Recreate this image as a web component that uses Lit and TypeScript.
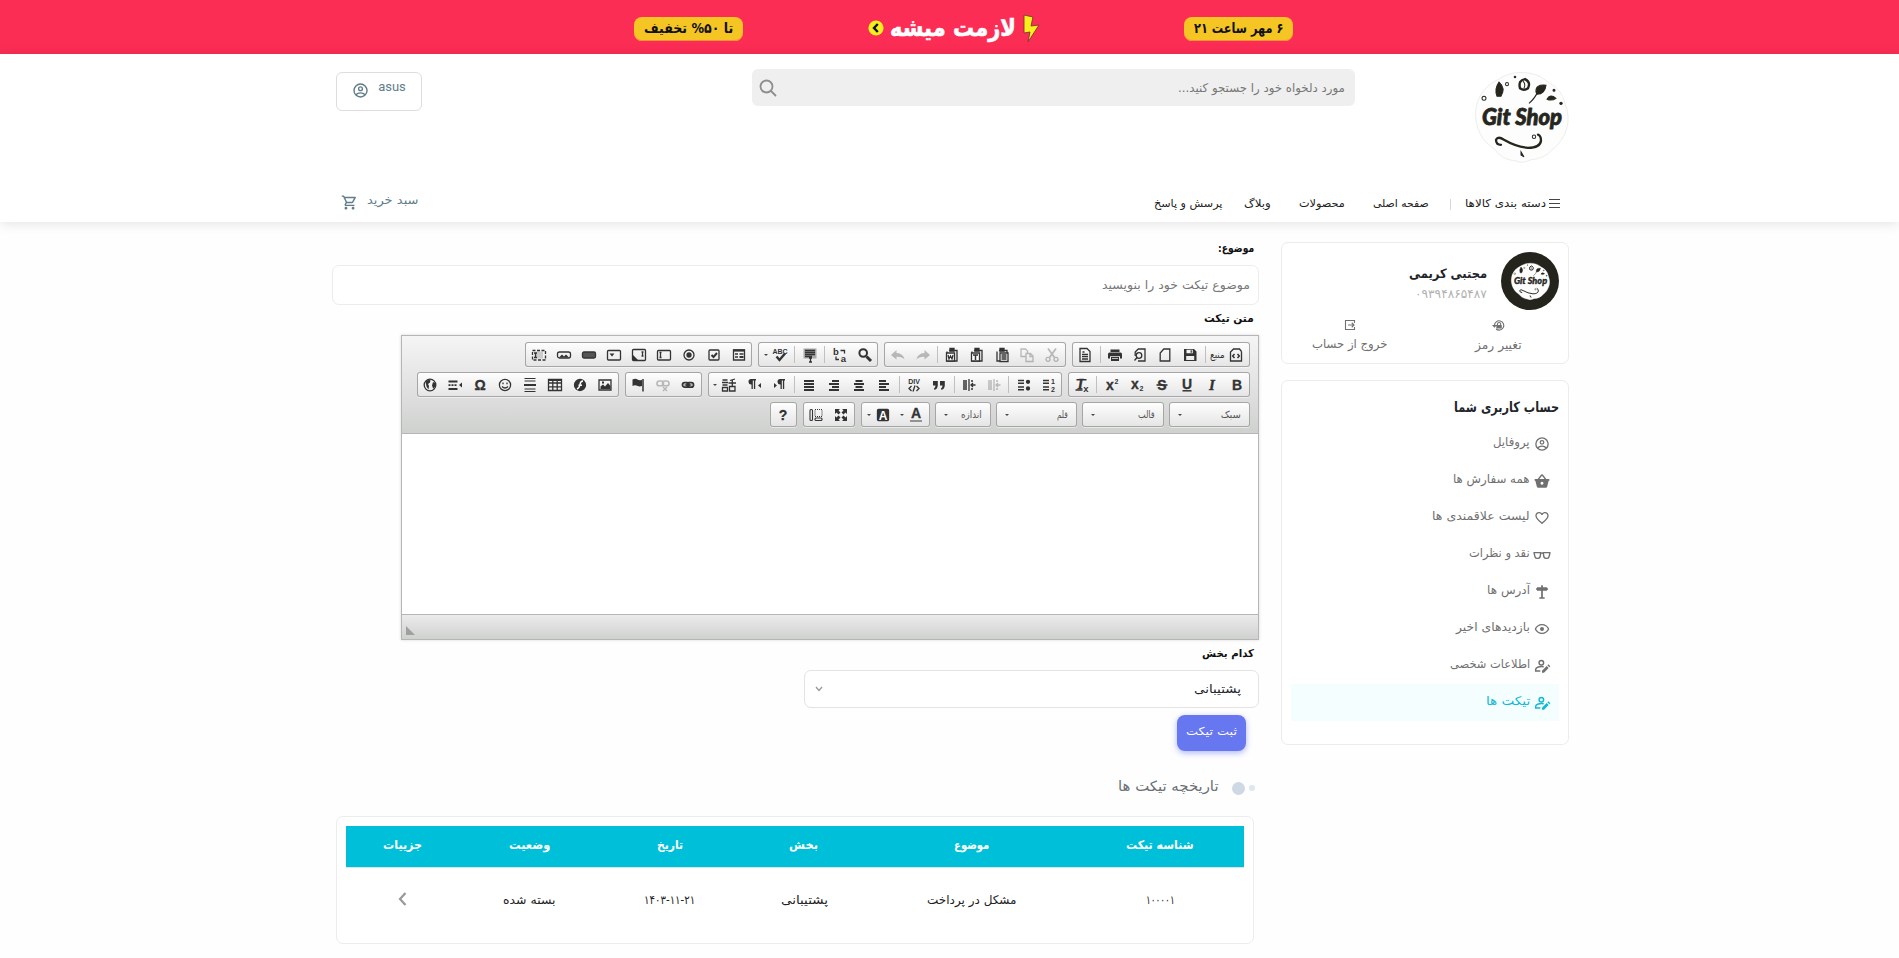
import { LitElement, html, svg, css, nothing } from "lit";
import { customElement, property } from "lit/decorators.js";

/* ---------- text that keeps to a given line width ---------- */
@customElement("fit-text")
class FitText extends LitElement {
  @property({ type: Number }) w = 0;
  static styles = css`
    :host { display: inline-flex; justify-content: flex-start; white-space: nowrap; flex: none; }
    .run { display: inline-block; flex: none; transform-origin: 100% 50%; }
  `;
  firstUpdated() {
    this.fit();
    document.fonts.ready.then(() => this.fit());
  }
  fit() {
    const run = this.renderRoot.querySelector(".run") as HTMLElement;
    const natural = run.offsetWidth;
    this.style.width = this.w + "px";
    if (natural) run.style.transform = `scaleX(${this.w / natural})`;
  }
  render() {
    return html`<span class="run"><slot></slot></span>`;
  }
}

const t = (text: string, w: number) => html`<fit-text w=${w}>${text}</fit-text>`;

/* ---------- icons ---------- */
const icon = (body: unknown, size = 16, box = 16) =>
  html`<svg width=${size} height=${size} viewBox="0 0 ${box} ${box}" fill="none" stroke="currentColor" stroke-width="1.3">${body}</svg>`;
const solid = (d: string) => svg`<path fill="currentColor" stroke="none" fill-rule="evenodd" d=${d} />`;
const line = (d: string) => svg`<path d=${d} />`;
const lines = (rows: [number, number, number][]) =>
  solid(rows.map(([x, y, w]) => `M${x} ${y}h${w}v2h-${w}z`).join(""));

const account = svg`<circle cx="12" cy="12" r="9.2" stroke-width="2"/><circle cx="12" cy="9.5" r="2.7" stroke-width="1.9"/><path stroke-width="2" d="M5.6 18c3-3.6 9.800-3.600 12.800 0"/>`;
const cart = solid("M15.55 13c.75 0 1.41-.41 1.75-1.03l3.58-6.49A.996.996 0 0 0 20.01 4H5.21l-.94-2H1v2h2l3.6 7.59-1.35 2.44C4.52 15.37 5.48 17 7 17h12v-2H7l1.1-2h7.45zM6.16 6h12.15l-2.76 5H8.53L6.16 6zM7 18c-1.1 0-1.99.9-1.99 2S5.9 22 7 22s2-.9 2-2-.9-2-2-2zm10 0c-1.1 0-1.99.9-1.99 2s.89 2 1.99 2 2-.9 2-2-.9-2-2-2z");
const basket = solid("M1 9h4.500l5.200-6.600q1.300-1.400 2.600 0L18.500 9H23v2.500h-1l-2.300 9q-.4 1.500-1.900 1.500H6.200q-1.500 0-1.900-1.500l-2.300-9H1zM8.200 9h7.600L12 4.300zM12 13.300a2.200 2.200 0 1 0 .01 0z");
const heart = solid("M12.1 18.55l-.1.1-.11-.1C7.14 14.24 4 11.39 4 8.5 4 6.5 5.5 5 7.5 5c1.54 0 3.04 1 3.57 2.36h1.86C13.46 6 14.96 5 16.5 5c2 0 3.5 1.5 3.5 3.5 0 2.89-3.14 5.74-7.9 10.05M16.5 3c-1.74 0-3.41.81-4.5 2.08C10.91 3.81 9.24 3 7.5 3 4.42 3 2 5.41 2 8.5c0 3.77 3.4 6.86 8.55 11.53L12 21.35l1.45-1.32C18.6 15.36 22 12.27 22 8.5 22 5.41 19.58 3 16.5 3z");
const glasses = svg`<path stroke-width="2.100" stroke-linejoin="round" d="M0 8.400h10l-.5 5q-.4 3.600-3.500 3.600H4.500q-2.700 0-3.200-3zM14 8.400h10l-1.300 5.600q-.5 3-3.200 3H18q-3.100 0-3.500-3.600zM9.500 9.800q2.500-1.600 5 0"/>`;
const sign = solid("M10.700 2h2.600v3H19l2.500 2.600L19 10.200h-5.700V20H16v2H8v-2h2.700v-9.800H4.500V8.800H3V6.500h1.500V5h6.200z");
const eye = solid("M12 9a3 3 0 0 1 3 3 3 3 0 0 1-3 3 3 3 0 0 1-3-3 3 3 0 0 1 3-3m0-4.500c5 0 9.270 3.110 11 7.500-1.730 4.390-6 7.500-11 7.500S2.730 16.390 1 12c1.730-4.390 6-7.500 11-7.500M3.180 12a9.821 9.821 0 0 0 17.640 0 9.821 9.821 0 0 0-17.640 0z");
const accountEdit = svg`<circle cx="11" cy="7.200" r="3.400" stroke-width="2.200"/><path stroke-width="2.200" d="M14.500 13.200C9 12 2.500 14 2.500 17.200V19.500h7"/><path fill="currentColor" stroke="none" d="M12 22v-3l7-7 3 3-7 7zM20 11l1.500-1.500 3 3L23 14z"/>`;
const lockReset = svg`<path stroke-width="2" d="M4.500 12a8.600 8.600 0 1 1 3 6.500"/><path fill="currentColor" stroke="none" d="M0 11h9l-4.500 5zM9 11v-1.500a4 4 0 0 1 8 0V11h1v6.500H8V11zm2 0h4V9.500a2 2 0 0 0-4 0z"/>`;
const logout = svg`<path stroke-width="2.200" d="M21 8V3H3v18h18v-5M8 12h12M15.500 7.500L20 12l-4.500 4.500"/>`;

const page = "M3 1.500h7l3 3v10H3z";
const para = "M8 2h5v1.400h-.8V12h-1.300V3.400H9.800V12H8.500V7.500a2.700 2.700 0 0 1-.5-5.500z";
const clip = svg`<path d="M3 4.500V14h10V3.500H5"/><path fill="currentColor" d="M6 1.500h4v2.500H6z"/>`;
const glyph = (s: string, cls = "") => svg`<text class="glyph ${cls}" x="8" y="13" text-anchor="middle">${s}</text>`;

const icons: Record<string, unknown> = {
  source: svg`${line("M13.500 4.500V14h-11V5l3-3h6l2 2.500")}<path stroke-width="1.500" d="M6.500 7L4.700 9l1.800 2M9.500 7l1.800 2-1.800 2"/>`,
  save: solid("M2 2h10l2.500 2.500V14H2zM4.500 2.800v3.400h6.300V2.800zM4.200 9v4h8V9zM8.600 3.200h1.200v2.500H8.600z"),
  newpage: line("M12.800 14H3.200V6l3.600-4h6z"),
  preview: svg`${line("M6 2h7v12H6M3.200 9V5l3-3")}<circle cx="7" cy="8.500" r="2.800"/>${line("M5 10.500L2.500 13.500")}`,
  print: solid("M3.500 2.500h9V5h-9zM2.500 5.500h11q1.500 0 1.500 1.500v4.500h-2V9.300H3v2.200H1V7q0-1.500 1.500-1.500zM4 10h8v4H4zM5 11v.8h6V11z"),
  templates: svg`${line(page)}${line("M5 7.500h6M5 9.700h6M5.500 5h2M5 12h6")}`,
  cut: svg`<path stroke-width="1.800" d="M4 1.500l6.500 9M12 1.500l-6.500 9"/><circle cx="4" cy="12.300" r="2"/><circle cx="12" cy="12.300" r="2"/>`,
  copy: svg`${line("M7 9.500H2V2h4.500l2 2v2")}${line("M7 6.500h4.500l2.500 2.500v5.500H7zM11 6.500v3h3")}`,
  paste: svg`${clip}<path fill="#fff" d="M6 6h8v8.500H6z"/>${line("M7.500 8h5M7.500 10h5M7.500 12h5")}`,
  pastetext: svg`${clip}<path fill="#fff" d="M2.500 6h8v8h-8z"/><path stroke-width="1.500" d="M4 8h5M6.500 8v5"/>`,
  pasteword: svg`${clip}<path fill="#fff" d="M2.500 6h8v8h-8z"/>${line("M4 8l1 4 1.500-3L8 12l1-4")}`,
  redo: solid("M9.500 3L15 8l-5.500 4.500V9.800Q4 9.500 1.500 12.500 2.500 6.500 9.500 6z"),
  undo: solid("M6.500 3L1 8l5.500 4.500V9.800Q12 9.500 14.500 12.500 13.500 6.500 6.500 6z"),
  find: svg`<circle cx="6.200" cy="6" r="3.800" stroke-width="2"/><path stroke-width="3" d="M9.500 9.500l4.500 4.500"/>`,
  replace: svg`<text class="glyph mid" x="4" y="8" text-anchor="middle">b</text><text class="glyph mid" x="11.500" y="14.500" text-anchor="middle">a</text>${line("M8.500 3.500h4v3M7 12.500H4v-3")}`,
  selectall: svg`<path fill="#a9a9a9" stroke="none" d="M1.500 1.500h13v10h-13z"/>${line("M3 3.500h10M3 5.500h10M3 7.500h10M3 9.500h7M8.500 10v5M7 15h3M7 11h3")}`,
  spell: svg`<text class="glyph tiny" x="8" y="7" text-anchor="middle">ABC</text><path stroke-width="2.400" d="M4.500 9.500l3 3.500L13 6.500"/>`,
  form: svg`<path d="M2.500 3h11v10h-11z"/><path stroke-width="2.200" d="M2 3.500h12"/>${line("M4 7h3M8.500 7h4M4 10h3")}<path stroke-width="2" d="M8.500 10h4"/>`,
  checkbox: svg`<rect x="3" y="3" width="10" height="10" rx="1"/><path stroke-width="2" d="M5.500 8l2 2 3.500-4"/>`,
  radio: svg`<circle cx="8" cy="8" r="5"/><circle cx="8" cy="8" r="2" fill="currentColor"/>`,
  textfield: svg`<rect x="1.500" y="3.500" width="13" height="9.500" rx="1"/>${line("M3.500 5.500h2M4.500 5.500v5M3.500 10.500h2")}`,
  textarea: svg`<rect x="1.500" y="2.500" width="13" height="11" rx="1"/>${line("M10.500 5h2M11.500 5v4M10.500 9h2")}${solid("M2 8l5 5H2z")}`,
  select: svg`<rect x="1.500" y="3.500" width="13" height="9.500" rx="1"/>${solid("M3.500 6.500h5L6 9.500z")}`,
  button: svg`<rect x="1.500" y="5" width="13" height="6" rx="1.500" fill="#555"/>`,
  imagebutton: svg`<rect x="1.500" y="5" width="13" height="6" rx="2"/>${solid("M3 10.500l3-3 2 2 2-2 3 3z")}`,
  hidden: svg`<path fill="#ccc" stroke="none" d="M5 4.500h7v7H5z"/><path stroke-dasharray="3 1.500" d="M1.500 3.500h13v9.500h-13z"/>${line("M3 6h3M4.500 6v4.500M3 10.500h3")}`,
  bold: glyph("B"), italic: glyph("I", "it"),
  underline: svg`<text class="glyph" x="8" y="11.500" text-anchor="middle">U</text><path stroke-width="1.500" d="M3.500 13.800h9"/>`,
  strike: svg`${glyph("S")}<path stroke-width="1.600" d="M2.500 8h11"/>`,
  sub: svg`<text class="glyph" x="6" y="11.500" text-anchor="middle">x</text><text class="glyph tiny" x="12.500" y="14" text-anchor="middle">2</text>`,
  sup: svg`<text class="glyph" x="6" y="12.500" text-anchor="middle">x</text><text class="glyph tiny" x="12.500" y="7" text-anchor="middle">2</text>`,
  removeformat: svg`<text class="glyph it" x="6.500" y="11.500" text-anchor="middle">I</text><path stroke-width="1.600" d="M2.500 2.800h10M1.500 13h7"/><text class="glyph mid" x="12" y="14.500" text-anchor="middle">x</text>`,
  numbered: svg`<path stroke-width="1.500" d="M2 3.500h6M2 6.300h6M2 10h6M2 12.800h6"/><text class="glyph tiny" x="12" y="7" text-anchor="middle">1</text><text class="glyph tiny" x="12" y="14.500" text-anchor="middle">2</text>`,
  bulleted: svg`<path stroke-width="1.500" d="M2 3.500h6M2 6.300h6M2 10h6M2 12.800h6"/><circle cx="12" cy="4.800" r="1.500" fill="currentColor"/><circle cx="12" cy="11.500" r="1.500" fill="currentColor"/>`,
  outdent: svg`${line("M2 4h4M2 6h4M2 8h4M2 10h4M2 12h4M8 2v12M14.500 8H10M12 6l-2 2 2 2M10 4h2M10 12h2")}`,
  indent: svg`${line("M2 4h4M2 6h4M2 8h4M2 10h4M2 12h4M8 2v12M14.500 8H10M12 6l-2 2 2 2M10 4h2M10 12h2")}`,
  quote: solid("M2 4h4.800v4.500Q6.500 12 3.500 13l-.5-1.500Q4.500 10.500 4.500 8.500H2zM9 4h4.800v4.500q-.3 3.500-3.300 4.500l-.5-1.500q1.500-1 1.500-3H9z"),
  div: svg`<text class="glyph tiny" x="8" y="7" text-anchor="middle">DIV</text>${line("M5.500 9L3 11.500 5.500 14M10.500 9l2.500 2.500-2.500 2.500M9 8.500L7 14.500")}`,
  left: lines([[3, 3, 7], [3, 6, 10], [3, 9, 7], [3, 12, 10]]),
  center: lines([[4.500, 3, 7], [3, 6, 10], [4.500, 9, 7], [3, 12, 10]]),
  right: lines([[6, 3, 7], [3, 6, 10], [6, 9, 7], [3, 12, 10]]),
  justify: lines([[3, 3, 10], [3, 6, 10], [3, 9, 10], [3, 12, 10]]),
  ltr: svg`${solid(para)}${solid("M2 6l3 2.500L2 11z")}`,
  rtl: svg`<g transform="translate(-4 0)">${solid(para)}</g>${solid("M14 6l-3 2.500 3 2.500z")}`,
  language: svg`${line("M1.500 3h5M1 5.500h6M1.500 8h5M1.500 10.500h5v3.500h-5zM14 2L9 3.500M7.500 6h7.500M11.300 3v6M8.500 9.500h5.500V14H8.500z")}`,
  link: svg`<rect x="2.500" y="5.700" width="6.500" height="4.400" rx="2.200" stroke-width="1.800"/><rect x="7" y="5.700" width="6.500" height="4.400" rx="2.200" stroke-width="1.800"/>${line("M4.500 8h7")}`,
  unlink: svg`<rect x="2" y="4" width="6.500" height="4.800" rx="2.400" stroke-width="1.600"/><rect x="7.500" y="4" width="6.500" height="4.800" rx="2.400" stroke-width="1.600"/>${line("M8 10l4 4M12 10l-4 4")}`,
  anchor: svg`${solid("M2.500 2.500q3-1.500 5 0t4.500.2V9q-2.500 1-4.800-.2T2.500 9z")}<path stroke-width="1.500" d="M13 2v12.500"/>`,
  image: svg`<path d="M2 3h12v10H2z"/>${solid("M3.500 12V9.500l2.500-2 2 2 3-3.500 2.500 3v3zM5 4.500h2v2H5z")}`,
  flash: svg`<circle cx="8" cy="8" r="5.500" fill="currentColor"/><path stroke="#fff" stroke-width="1.500" d="M11 4Q8.500 4 8 7.500T5 12M6.500 8.300h3.500"/>`,
  table: svg`<path d="M1.500 2.500h13v11h-13zM1.500 6h13M1.500 9.800h13M5.800 4v10M10.200 4v10"/><path stroke-width="2" d="M1 3h14"/>`,
  hr: svg`<path stroke-width="1" d="M2.500 1.500h11M2.500 4h11M2.500 12h11M2.500 14.500h11"/><path stroke-width="2" d="M2 8h12"/>`,
  smiley: svg`<circle cx="8" cy="8" r="5.600"/>${line("M6 5.500v1.800M10 5.500v1.800M5 9.500q3 3 6 0")}`,
  omega: glyph("Ω"),
  pagebreak: svg`<path stroke-width="2.200" d="M1.500 4.500h9M1.500 12h9"/><path stroke-width="1.800" stroke-dasharray="2 1" d="M1.500 8.200h9"/>${solid("M15 5.500v5L12 8z")}`,
  iframe: svg`<circle cx="8" cy="8" r="5.800"/>${solid("M3.500 4.500L7 2.500l1.500 1L8 5.500 6 7l1 2-.5 3.500L4.500 9.500zM11 5l2 1 .2 3.500-2 2.300-1.200-3.300z")}`,
  textcolor: svg`<text class="glyph" x="8" y="11" text-anchor="middle">A</text><path stroke="#888" stroke-width="1.800" d="M2 14h12"/>`,
  bgcolor: svg`<rect x="2.500" y="2.500" width="11" height="11" rx="1" fill="currentColor"/><text class="glyph inv" x="8" y="12.500" text-anchor="middle">A</text>`,
  maximize: solid("M2 2h5L5.500 3.500l2 2-2 2-2-2L2 7zM14 2v5l-1.500-1.500-2 2-2-2 2-2L9 2zM2 14V9l1.500 1.500 2-2 2 2-2 2L7 14zM14 14H9l1.500-1.500-2-2 2-2 2 2L14 9z"),
  showblocks: svg`<g stroke-width="1.100"><rect x="2" y="2.500" width="2.500" height="11" rx="1"/><path stroke-dasharray="1 1" d="M7 2.500h7v7H7z"/><rect x="7" y="11" width="7" height="2.500" rx="1"/></g>`,
  help: glyph("?"),
};

const OFF = new Set(["cut", "copy", "redo", "undo", "outdent", "unlink"]);
const ARROW = new Set(["spell", "language", "textcolor", "bgcolor"]);

const toolbar: string[][] = [
  ["source | save newpage preview print | templates", "cut copy paste pastetext pasteword | redo undo", "find replace | selectall | spell", "form checkbox radio textfield textarea select button imagebutton hidden"],
  ["bold italic underline strike sub sup | removeformat", "numbered bulleted | outdent indent | quote div | left center right justify | ltr rtl language", "link unlink anchor", "image flash table hr smiley omega pagebreak iframe"],
  ["combo:سبک:20:81.500", "combo:قالب:17:81.500", "combo:قلم:11:81.500", "combo:اندازه:21:56", "textcolor bgcolor", "maximize showblocks", "help"],
];

/* ---------- rich text editor ---------- */
@customElement("rich-editor")
class RichEditor extends LitElement {
  static styles = css`
    :host { display: flex; flex-direction: column; box-sizing: border-box; width: 858px; height: 305px; border: 1px solid #b6b6b6; background: #fff; box-shadow: 0 0 3px rgba(0,0,0,.15); }
    .bars { height: 98px; box-sizing: border-box; padding: 6px 8px 0; border-bottom: 1px solid #b6b6b6; background: linear-gradient(#f5f5f5, #cfd1cf); display: flex; flex-direction: column; gap: 5px; }
    .bar { display: flex; gap: 6px; height: 25px; }
    .group { display: flex; flex: none; align-items: center; padding: 0 1px; border-radius: 3px; background: linear-gradient(#fff, #e4e4e4); box-shadow: inset 0 0 0 1px #a6a6a6, 0 1px 0 rgba(255,255,255,.5); color: #333; }
    .btn { display: flex; align-items: center; justify-content: center; width: 25px; height: 25px; }
    .btn.wide { width: 33.300px; gap: 4px; }
    .btn.src { width: 41.500px; gap: 3px; font-size: 10px; padding-left: 2px; box-sizing: border-box; justify-content: flex-end; }
    .off { opacity: .3; }
    .sep { width: 1px; height: 17px; margin: 0 1.900px; background: #c0c0c0; }
    .arr { border: 2px solid transparent; border-top: 2px solid #474747; border-bottom: 0; }
    .combo { box-sizing: border-box; justify-content: space-between; padding: 0 9px; margin-left: -1px; font-size: 10px; height: 25px; color: #555; }
    .body { flex: 1; }
    .foot { height: 25px; box-sizing: border-box; border-top: 1px solid #b6b6b6; background: linear-gradient(#ebebeb, #cfd1cf); display: flex; justify-content: flex-end; align-items: flex-end; padding: 0 0 4px 4px; }
    svg { display: block; flex: none; overflow: visible; }
    .glyph { font: 700 14px "Liberation Sans", sans-serif; fill: currentColor; stroke: currentColor; stroke-width: .3px; }
    .it { font-family: "Liberation Serif", serif; font-style: italic; font-size: 15px; }
    .mid { font-size: 9.500px; stroke: none; }
    .tiny { font-size: 7px; stroke: none; }
    .inv { fill: #fff; stroke: none; font-size: 12px; }
  `;
  button(name: string) {
    if (name === "|") return html`<span class="sep"></span>`;
    const kind = name === "source" ? "src" : ARROW.has(name) ? "wide" : "";
    return html`<span class="btn ${kind} ${OFF.has(name) ? "off" : ""}">
      ${icon(icons[name])}${name === "source" ? t("منبع", 15) : nothing}
      ${ARROW.has(name) ? html`<span class="arr"></span>` : nothing}
    </span>`;
  }
  group(spec: string) {
    if (spec.startsWith("combo:")) {
      const [, label, w, full] = spec.split(":");
      return html`<div class="group combo" style="width:${full}px">${t(label, +w)}<span class="arr"></span></div>`;
    }
    return html`<div class="group">${spec.split(" ").map((n) => this.button(n))}</div>`;
  }
  render() {
    return html`
      <div class="bars">${toolbar.map((row) => html`<div class="bar">${row.map((g) => this.group(g))}</div>`)}</div>
      <div class="body"></div>
      <div class="foot"><svg width="9" height="9"><path d="M0 0L9 9H0z" fill="#a0a0a0" /></svg></div>
    `;
  }
}

/* ---------- shop emblem ---------- */
const emblem = (w: number, h: number) => html`
  <svg width=${w} height=${h} viewBox="0 0 94 90" preserveAspectRatio="none">
    <path d="M46 .5Q62 0 73 10q14 7 17 21 5 13 2 24-4 14-15 22-8 9-22 10-8 4-14 1-14-1-22-12Q7 68 3 56-2 42 3 28 9 14 22 8 34 0 46 .5z" fill="#fdfdfd" stroke="#e8e8e6" stroke-width=".8" />
    <g fill="#26261e" stroke="#26261e">
      <text x="47" y="52" text-anchor="middle" textLength="80" lengthAdjust="spacingAndGlyphs" font-family="Lato, sans-serif" font-weight="900" font-style="italic" font-size="23" stroke-width=".8" stroke-linejoin="round">Git Shop</text>
      <path d="M22 24q-3-7 2-14 7 6 2 14z" />
      <path d="M45 16q-2-8 5-9 6 3 3 9-4 3-8 0z" fill="none" stroke-width="2.400" /><path d="M48 9q3 3 1 7" fill="none" />
      <path d="M61 20q-1-8 10-7-1 9-9 9z" /><path d="M54 31q6-5 9-12" fill="none" stroke-width="1.200" />
      <path d="M72 27q3-6 9-1-4 3-9 1z" />
      <g fill="none"><circle cx="32" cy="12" r="1.500" /><circle cx="9" cy="26" r="2" /><circle cx="59" cy="64" r="1.700" /></g>
      <circle cx="40" cy="5" r=".8" /><circle cx="79" cy="18" r="1" /><circle cx="86" cy="31" r="1.200" />
      <path d="M26 72q-5 0-5-5 2-4 8 0 12 7 24 8 12 0 13-7 0-5-3-6" fill="none" stroke-width="2.300" stroke-linecap="round" />
      <path d="M46 79l3 5-3-2z" />
    </g>
  </svg>`;

const menu: [string, number, unknown][] = [
  ["پروفایل", 37, account],
  ["همه سفارش ها", 77, basket],
  ["لیست علاقمندی ها", 98, heart],
  ["نقد و نظرات", 61, glasses],
  ["آدرس ها", 43, sign],
  ["بازدیدهای اخیر", 74, eye],
  ["اطلاعات شخصی", 80, accountEdit],
  ["تیکت ها", 44, accountEdit],
];

const columns: [string, number, string, number][] = [
  ["شناسه تیکت", 68, "۱۰۰۰۰۱", 29],
  ["موضوع", 35, "مشکل در پرداخت", 89],
  ["بخش", 29, "پشتیبانی", 47],
  ["تاریخ", 26, "۱۴۰۳-۱۱-۲۱", 51],
  ["وضعیت", 41, "بسته شده", 53],
  ["جزییات", 39, "", 0],
];

@customElement("app-root")
class AppRoot extends LitElement {
  static styles = css`
    :host { display: block; direction: rtl; width: 100%; height: 958px; overflow: hidden; background: #fefefe; color: #222; font-family: "DejaVu Sans", sans-serif; font-size: 12px; line-height: 20px; }
    svg { display: block; flex: none; overflow: visible; }
    .banner { height: 54px; box-sizing: border-box; background: #fc2d55; display: flex; justify-content: space-between; align-items: center; padding: 4px 606px 0 634px; }
    .pill { width: 109px; height: 24px; border-radius: 8px; background: #f5c523; color: #111; font-weight: 700; font-size: 14px; display: flex; align-items: center; justify-content: center; box-shadow: inset 0 -1px 0 #f2913a; padding-bottom: 2px; box-sizing: border-box; }
    .slogan { display: flex; align-items: center; gap: 6px; color: #fff; font-weight: 700; font-size: 24px; -webkit-text-stroke: .6px #fff; margin-right: 20px; margin-bottom: 2px; }
    .header { height: 168px; box-sizing: border-box; background: #fff; box-shadow: 0 1px 12px rgba(0,0,0,.12); padding: 15px 330px 0 336px; display: flex; flex-direction: column; justify-content: space-between; position: relative; }
    .top { display: flex; align-items: flex-start; }
    .logo { margin-top: 3px; }
    .search { margin-right: 120px; width: 603px; height: 37px; box-sizing: border-box; border-radius: 6px; background: #efefef; color: #777; display: flex; justify-content: space-between; align-items: center; padding: 0 10px 0 7px; }
    .user { margin-top: 3px; margin-right: auto; width: 86px; height: 39px; box-sizing: border-box; border: 1px solid #ddd; border-radius: 6px; display: flex; justify-content: center; align-items: flex-start; gap: 9px; color: #607d8b; padding-top: 4px; }
    .name-tag { font: 400 13px/20px Roboto, sans-serif; }
    .user svg { margin-top: 5px; }
    .nav { display: flex; align-items: center; height: 38px; font-size: 11px; padding: 2px 9px 0 5px; box-sizing: border-box; }
    .nav .rule { width: 1px; height: 11px; background: #d8d8d8; margin: 0 14px 0 21px; }
    .nav .burger { margin-left: 3px; }
    .g2 { margin-right: 28px; } .g3 { margin-right: 22px; }
    .basket { margin-right: auto; display: flex; align-items: center; gap: 9px; color: #607d8b; margin-bottom: 7px; font-size: 12px; }
    .basket fit-text { margin-bottom: 1px; }
    .basket svg { margin-top: 4px; }
    .page { display: flex; padding-right: 330px; }
    .side { width: 288px; padding-top: 20px; color: #707070; }
    .card { box-sizing: border-box; border: 1px solid #ececec; border-radius: 7px; background: #fff; }
    .profile { height: 122px; padding: 9px; }
    .who { display: flex; gap: 14px; }
    .avatar { width: 58px; height: 58px; border-radius: 50%; background: #24241c; display: flex; align-items: center; justify-content: center; }
    .name { color: #212529; font-weight: 700; font-size: 13px; margin-top: 12px; }
    .phone { color: #b0b0b0; line-height: 20px; }
    .acts { display: flex; justify-content: space-between; padding: 7px 37px 0 21px; text-align: center; }
    .acts svg { margin: 2px auto 3px; }
    .acct { margin-top: 16px; height: 365px; padding: 9px; }
    .acct h3 { margin: 7px 0 8px; font-size: 14px; line-height: 20px; color: #212529; display: flex; }
    .item { height: 37px; box-sizing: border-box; padding-right: 9px; display: flex; align-items: center; gap: 4px; }
    .item fit-text { margin-bottom: 3px; }
    .item svg { margin-top: 1px; }
    .item.on { background: #f4feff; color: #10b9d4; }
    .main { margin-right: 22px; width: 927px; }
    label { display: flex; height: 20px; padding-right: 5px; color: #111; font-weight: 700; font-size: 11px; }
    .l1 { margin-top: 17px; } .l2 { margin-top: 4px; } .l3 { margin-top: 4px; }
    .subject { margin-top: 6px; height: 40px; display: flex; align-items: center; padding: 0 8px 1px; color: #777; }
    rich-editor { margin-top: 6px; }
    .dept { width: 455px; height: 38px; margin-top: 6px; border-color: #e3e3e3; display: flex; justify-content: space-between; align-items: center; padding: 0 17px 1px 10px; color: #212529; }
    .send { margin: 7px 13px 0 0; width: 69px; height: 36px; border-radius: 8px; background: #6777ef; color: #fff; font-size: 11px; display: flex; align-items: center; justify-content: center; box-shadow: 0 2px 6px #acb5f6; padding-bottom: 2px; box-sizing: border-box; }
    .hist { margin: 23px 4px 0 0; height: 24px; display: flex; align-items: center; color: #6b7075; font-size: 14px; }
    .d1 { width: 6px; height: 6px; border-radius: 50%; background: #dfe6f0; margin: 4px 0 0 4px; }
    .d2 { width: 13px; height: 13px; border-radius: 50%; background: #cfd8e5; margin: 5px 0 0 13px; }
    .tickets { width: 918px; height: 128px; margin: 18px 5px 0 0; padding: 9px; }
    .row { display: grid; grid-template-columns: 168fr 208fr 128fr 140fr 141fr 113fr; justify-items: center; align-items: center; }
    .head { height: 42px; box-sizing: border-box; background: #00bfd9; border-bottom: 1px solid #dee2e6; color: #fff; font-weight: 700; padding-bottom: 3px; }
    .data { height: 64px; }
    .data svg { margin-bottom: 2px; }
    .last { padding-left: 8px; }
  `;
  render() {
    return html`
      <div class="banner">
        <div class="pill">${t("۶ مهر ساعت ۲۱", 89)}</div>
        <div class="slogan">
          <svg width="18" height="29" viewBox="0 0 18 29"><path d="M2 1l9 2-2 9 8-1L6 28l2-10-6 1z" fill="#f8f01c" stroke="#7a3a30" stroke-width=".9" /></svg>
          ${t("لازمت میشه", 126)}
          <svg width="16" height="16"><circle cx="8" cy="8" r="7.600" fill="#f3ee1e" /><path d="M9.800 4L6 8l3.800 4" fill="none" stroke="#111" stroke-width="2.400" /></svg>
        </div>
        <div class="pill">${t("تا ۵۰% تخفیف", 89)}</div>
      </div>
      <div class="header">
        <div class="top">
          <div class="logo">${emblem(94, 91)}</div>
          <div class="search">${t("مورد دلخواه خود را جستجو کنید...", 167)}
            <svg width="18" height="18" fill="none" stroke="#8e8e8e" stroke-width="1.800"><circle cx="7.500" cy="7.500" r="6" /><path d="M12 12l5 5" /></svg>
          </div>
          <div class="user"><span class="name-tag">asus</span>${icon(account, 17, 24)}</div>
        </div>
        <div class="nav">
          <svg class="burger" width="11" height="10" stroke="#444"><path d="M0 .5h11M0 4.500h11M0 8.500h11" /></svg>
          ${t("دسته بندی کالاها", 81)}<span class="rule"></span>
          ${t("صفحه اصلی", 56)}<span class="g2"></span>${t("محصولات", 46)}<span class="g2"></span>${t("وبلاگ", 27)}<span class="g3"></span>${t("پرسش و پاسخ", 68)}
          <div class="basket">${t("سبد خرید", 51)}${icon(cart, 17, 24)}</div>
        </div>
      </div>
      <div class="page">
        <div class="side">
          <div class="card profile">
            <div class="who">
              <div class="avatar">${emblem(39, 37)}</div>
              <div><div class="name">${t("مجتبی کریمی", 78)}</div><div class="phone">${t("۰۹۳۹۴۸۶۵۴۸۷", 72)}</div></div>
            </div>
            <div class="acts">
              <div>${icon(lockReset, 13, 24)}${t("تغییر رمز", 47)}</div>
              <div>${icon(logout, 12, 24)}${t("خروج از حساب", 75)}</div>
            </div>
          </div>
          <div class="card acct">
            <h3>${t("حساب کاربری شما", 105)}</h3>
            ${menu.map(([label, w, ic], i) => html`<div class="item ${i === menu.length - 1 ? "on" : ""}">${icon(ic, 16, 24)}${t(label, w)}</div>`)}
          </div>
        </div>
        <div class="main">
          <label class="l1">${t("موضوع:", 36)}</label>
          <div class="card subject">${t("موضوع تیکت خود را بنویسید", 148)}</div>
          <label class="l2">${t("متن تیکت", 50)}</label>
          <rich-editor></rich-editor>
          <label class="l3">${t("کدام بخش", 52)}</label>
          <div class="card dept">${t("پشتیبانی", 47)}<svg width="8" height="6" fill="none" stroke="#999" stroke-width="1.300"><path d="M1 1l3 3.500L7 1" /></svg></div>
          <div class="send">${t("ثبت تیکت", 51)}</div>
          <div class="hist"><span class="d1"></span><span class="d2"></span>${t("تاریخچه تیکت ها", 101)}</div>
          <div class="card tickets">
            <div class="row head">${columns.map(([h, w]) => t(h, w))}</div>
            <div class="row data">${columns.map(([, , v, w]) => v ? t(v, w) : html`<svg width="9" height="14" fill="none" stroke="#999" stroke-width="2.200"><path d="M7.500 1L2 7l5.500 6" /></svg>`)}</div>
          </div>
        </div>
      </div>
    `;
  }
}
